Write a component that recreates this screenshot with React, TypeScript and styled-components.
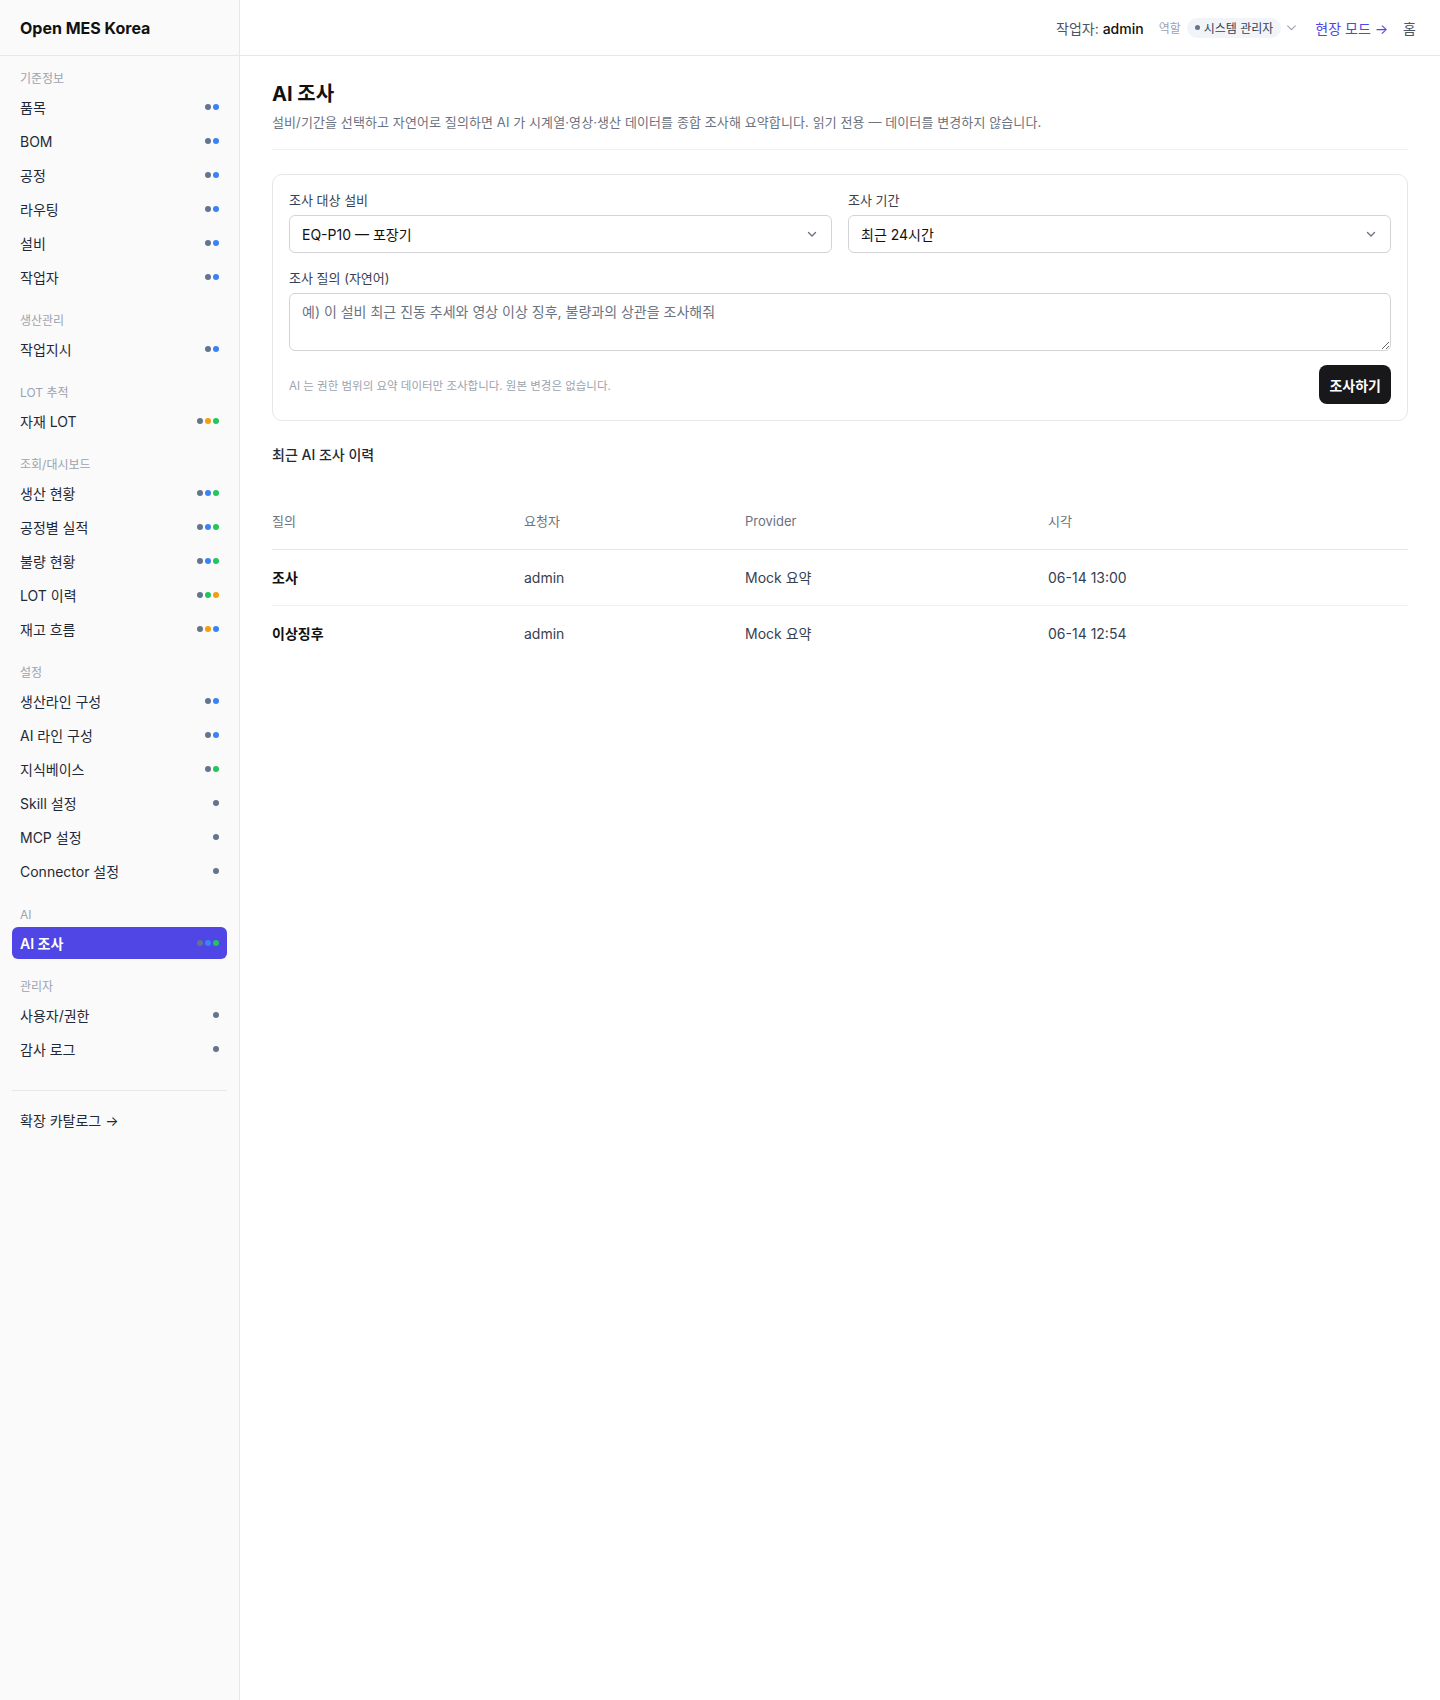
import React from 'react';
import styled, { createGlobalStyle } from 'styled-components';

const GlobalStyle = createGlobalStyle`
  * {
    box-sizing: border-box;
  }
  body {
    margin: 0;
    background: #ffffff;
    color: #1f2937;
    font-family: Inter, "Noto Sans CJK KR", "Noto Sans", sans-serif;
    -webkit-font-smoothing: antialiased;
  }
`;

type DotColor = 'gray' | 'blue' | 'orange' | 'green';

const dotColors: Record<DotColor, string> = {
  gray: '#64748b',
  blue: '#3b82f6',
  orange: '#f59e0b',
  green: '#22c55e',
};

interface NavItem {
  label: string;
  dots: DotColor[];
  active?: boolean;
}

interface NavGroup {
  title: string;
  items: NavItem[];
}

const navGroups: NavGroup[] = [
  {
    title: '기준정보',
    items: [
      { label: '품목', dots: ['gray', 'blue'] },
      { label: 'BOM', dots: ['gray', 'blue'] },
      { label: '공정', dots: ['gray', 'blue'] },
      { label: '라우팅', dots: ['gray', 'blue'] },
      { label: '설비', dots: ['gray', 'blue'] },
      { label: '작업자', dots: ['gray', 'blue'] },
    ],
  },
  {
    title: '생산관리',
    items: [{ label: '작업지시', dots: ['gray', 'blue'] }],
  },
  {
    title: 'LOT 추적',
    items: [{ label: '자재 LOT', dots: ['gray', 'orange', 'green'] }],
  },
  {
    title: '조회/대시보드',
    items: [
      { label: '생산 현황', dots: ['gray', 'blue', 'green'] },
      { label: '공정별 실적', dots: ['gray', 'blue', 'green'] },
      { label: '불량 현황', dots: ['gray', 'blue', 'green'] },
      { label: 'LOT 이력', dots: ['gray', 'green', 'orange'] },
      { label: '재고 흐름', dots: ['gray', 'orange', 'blue'] },
    ],
  },
  {
    title: '설정',
    items: [
      { label: '생산라인 구성', dots: ['gray', 'blue'] },
      { label: 'AI 라인 구성', dots: ['gray', 'blue'] },
      { label: '지식베이스', dots: ['gray', 'green'] },
      { label: 'Skill 설정', dots: ['gray'] },
      { label: 'MCP 설정', dots: ['gray'] },
      { label: 'Connector 설정', dots: ['gray'] },
    ],
  },
  {
    title: 'AI',
    items: [{ label: 'AI 조사', dots: ['gray', 'blue', 'green'], active: true }],
  },
  {
    title: '관리자',
    items: [
      { label: '사용자/권한', dots: ['gray'] },
      { label: '감사 로그', dots: ['gray'] },
    ],
  },
];

const history = [
  { query: '조사', user: 'admin', provider: 'Mock 요약', time: '06-14 13:00' },
  { query: '이상징후', user: 'admin', provider: 'Mock 요약', time: '06-14 12:54' },
];

const Shell = styled.div`
  display: flex;
  min-height: 100vh;
`;

const Sidebar = styled.aside`
  width: 240px;
  flex-shrink: 0;
  background: #fafafa;
  border-right: 1px solid #e5e7eb;
`;

const Brand = styled.div`
  height: 56px;
  display: flex;
  align-items: center;
  padding: 0 20px;
  border-bottom: 1px solid #e5e7eb;
  font-size: 16px;
  font-weight: 700;
  color: #111111;
`;

const Nav = styled.nav`
  padding: 15px 12px 0;
`;

const Group = styled.div`
  & + & {
    margin-top: 20px;
  }
`;

const GroupTitle = styled.div`
  padding: 0 8px;
  margin-bottom: 4px;
  font-size: 12px;
  line-height: 16px;
  font-weight: 400;
  color: #9ca3af;
`;

const ItemList = styled.div`
  display: flex;
  flex-direction: column;
  gap: 2px;
`;

const Item = styled.a<{ $active?: boolean }>`
  height: 32px;
  display: flex;
  align-items: center;
  justify-content: space-between;
  padding: 0 8px;
  border-radius: 6px;
  font-size: 14px;
  font-weight: ${(p) => (p.$active ? 600 : 400)};
  color: ${(p) => (p.$active ? '#ffffff' : '#1f2937')};
  background: ${(p) => (p.$active ? '#4f46e5' : 'transparent')};
  text-decoration: none;
  cursor: pointer;
`;

const Dots = styled.span`
  display: flex;
  gap: 2px;
`;

const Dot = styled.span<{ $color: DotColor }>`
  width: 6px;
  height: 6px;
  border-radius: 50%;
  background: ${(p) => dotColors[p.$color]};
`;

const SideDivider = styled.hr`
  margin: 25px 0 0;
  border: 0;
  border-top: 1px solid #e5e7eb;
`;

const CatalogLink = styled.a`
  display: block;
  margin-top: 20px;
  padding: 0 8px;
  font-size: 14px;
  line-height: 20px;
  font-weight: 400;
  color: #1f2937;
  text-decoration: none;
`;

const Main = styled.div`
  flex: 1;
  min-width: 0;
`;

const TopBar = styled.header`
  height: 56px;
  display: flex;
  align-items: center;
  justify-content: flex-end;
  gap: 15px;
  padding: 0 24px;
  border-bottom: 1px solid #e5e7eb;
  font-size: 14px;
`;

const Operator = styled.span`
  color: #4b5563;

  b {
    font-weight: 500;
    color: #111111;
  }
`;

const RoleBox = styled.div`
  display: flex;
  align-items: center;
  gap: 6px;
  margin-right: 3px;
`;

const RoleLabel = styled.span`
  font-size: 12px;
  color: #9ca3af;
`;

const RolePill = styled.span`
  height: 20px;
  display: inline-flex;
  align-items: center;
  gap: 4px;
  padding: 0 8px;
  border-radius: 10px;
  background: #f1f5f9;
  font-size: 12px;
  font-weight: 400;
  color: #334155;

  &::before {
    content: '';
    width: 5px;
    height: 5px;
    border-radius: 50%;
    background: #64748b;
  }
`;

const RoleCaret = styled.svg`
  margin-left: -1px;
`;

const FieldModeLink = styled.a`
  color: #4f46e5;
  font-weight: 400;
  text-decoration: none;
`;

const HomeLink = styled.a`
  color: #4b5563;
  text-decoration: none;
`;

const Content = styled.main`
  padding: 24px 32px;
`;

const PageHead = styled.div`
  padding-bottom: 17px;
  border-bottom: 1px solid #f0f0f0;
`;

const Title = styled.h1`
  margin: 0;
  font-size: 20px;
  line-height: 28px;
  font-weight: 700;
  color: #111111;
`;

const Subtitle = styled.p`
  margin: 4px 0 0;
  font-size: 13px;
  line-height: 20px;
  letter-spacing: 0.1px;
  color: #6b7280;
`;

const Card = styled.section`
  margin-top: 24px;
  padding: 16px;
  border: 1px solid #e5e7eb;
  border-radius: 10px;
`;

const FieldGrid = styled.div`
  display: grid;
  grid-template-columns: 1fr 1fr;
  gap: 16px;
`;

const Field = styled.label<{ $wide?: boolean }>`
  display: block;
  grid-column: ${(p) => (p.$wide ? '1 / -1' : 'auto')};
`;

const FieldLabel = styled.span`
  display: block;
  margin-bottom: 6px;
  font-size: 13px;
  line-height: 18px;
  font-weight: 400;
  color: #374151;
`;

const SelectBox = styled.div`
  height: 38px;
  display: flex;
  align-items: center;
  padding: 0 12px;
  border: 1px solid #d4d4d8;
  border-radius: 6px;
  background: #ffffff;
  font-size: 14px;
  font-weight: 400;
  color: #111111;
`;

const Chevron = styled.svg`
  margin-left: auto;
  margin-right: 2px;
`;

const QueryInput = styled.textarea`
  display: block;
  width: 100%;
  height: 58px;
  padding: 8px 12px;
  border: 1px solid #d4d4d8;
  border-radius: 6px;
  font-family: inherit;
  font-size: 14px;
  line-height: 20px;
  color: #111111;
  resize: vertical;

  &::placeholder {
    color: #6b7280;
  }
`;

const CardFooter = styled.div`
  margin-top: 14px;
  display: flex;
  align-items: center;
  justify-content: space-between;
`;

const Note = styled.span`
  font-size: 11.5px;
  color: #9ca3af;
`;

const RunButton = styled.button`
  height: 39px;
  padding: 0 10px;
  border: 0;
  border-radius: 8px;
  background: #18181b;
  color: #ffffff;
  font-family: inherit;
  font-size: 14px;
  font-weight: 700;
  cursor: pointer;
`;

const SectionTitle = styled.h2`
  margin: 24px 0 0;
  font-size: 14px;
  line-height: 20px;
  font-weight: 500;
  color: #1f2937;
`;

const Table = styled.table`
  width: 100%;
  margin-top: 28px;
  border-collapse: collapse;
  table-layout: fixed;
  font-size: 14px;
`;

const Th = styled.th`
  height: 56px;
  padding: 0 12px 0 0;
  text-align: left;
  font-size: 13px;
  font-weight: 400;
  color: #6b7280;
  border-bottom: 1px solid #e5e7eb;
`;

const Tr = styled.tr`
  & + & td {
    border-top: 1px solid #f0f0f0;
  }
`;

const Td = styled.td<{ $strong?: boolean }>`
  height: 56px;
  padding: 0 12px 0 0;
  font-weight: ${(p) => (p.$strong ? 700 : 400)};
  color: ${(p) => (p.$strong ? '#111111' : '#374151')};
`;

const ChevronDown = ({ size = 10, color = '#6b7280' }: { size?: number; color?: string }) => (
  <Chevron width={size} height={size} viewBox="0 0 10 10" fill="none">
    <path d="M1.5 3.5 5 7l3.5-3.5" stroke={color} strokeWidth="1.4" strokeLinecap="round" strokeLinejoin="round" />
  </Chevron>
);

const App = () => {
  return (
    <>
      <GlobalStyle />
      <Shell>
        <Sidebar>
          <Brand>Open MES Korea</Brand>
          <Nav>
            {navGroups.map((group) => (
              <Group key={group.title}>
                <GroupTitle>{group.title}</GroupTitle>
                <ItemList>
                  {group.items.map((item) => (
                    <Item key={item.label} $active={item.active}>
                      {item.label}
                      <Dots>
                        {item.dots.map((c, i) => (
                          <Dot key={i} $color={c} />
                        ))}
                      </Dots>
                    </Item>
                  ))}
                </ItemList>
              </Group>
            ))}
            <SideDivider />
            <CatalogLink>확장 카탈로그 →</CatalogLink>
          </Nav>
        </Sidebar>

        <Main>
          <TopBar>
            <Operator>
              작업자: <b>admin</b>
            </Operator>
            <RoleBox>
              <RoleLabel>역할</RoleLabel>
              <RolePill>시스템 관리자</RolePill>
              <RoleCaret width="11" height="11" viewBox="0 0 10 10" fill="none">
                <path d="M1.5 3.5 5 7l3.5-3.5" stroke="#9ca3af" strokeWidth="1" strokeLinecap="round" />
              </RoleCaret>
            </RoleBox>
            <FieldModeLink>현장 모드 →</FieldModeLink>
            <HomeLink>홈</HomeLink>
          </TopBar>

          <Content>
            <PageHead>
              <Title>AI 조사</Title>
              <Subtitle>
                설비/기간을 선택하고 자연어로 질의하면 AI 가 시계열·영상·생산 데이터를 종합 조사해 요약합니다. 읽기 전용 — 데이터를 변경하지 않습니다.
              </Subtitle>
            </PageHead>

            <Card>
              <FieldGrid>
                <Field>
                  <FieldLabel>조사 대상 설비</FieldLabel>
                  <SelectBox>
                    EQ-P10 — 포장기
                    <ChevronDown />
                  </SelectBox>
                </Field>
                <Field>
                  <FieldLabel>조사 기간</FieldLabel>
                  <SelectBox>
                    최근 24시간
                    <ChevronDown />
                  </SelectBox>
                </Field>
                <Field $wide>
                  <FieldLabel>조사 질의 (자연어)</FieldLabel>
                  <QueryInput placeholder="예) 이 설비 최근 진동 추세와 영상 이상 징후, 불량과의 상관을 조사해줘" />
                </Field>
              </FieldGrid>
              <CardFooter>
                <Note>AI 는 권한 범위의 요약 데이터만 조사합니다. 원본 변경은 없습니다.</Note>
                <RunButton>조사하기</RunButton>
              </CardFooter>
            </Card>

            <SectionTitle>최근 AI 조사 이력</SectionTitle>
            <Table>
              <colgroup>
                <col style={{ width: 252 }} />
                <col style={{ width: 221 }} />
                <col style={{ width: 303 }} />
                <col />
              </colgroup>
              <thead>
                <tr>
                  <Th>질의</Th>
                  <Th>요청자</Th>
                  <Th>Provider</Th>
                  <Th>시각</Th>
                </tr>
              </thead>
              <tbody>
                {history.map((row) => (
                  <Tr key={row.time}>
                    <Td $strong>{row.query}</Td>
                    <Td>{row.user}</Td>
                    <Td>{row.provider}</Td>
                    <Td>{row.time}</Td>
                  </Tr>
                ))}
              </tbody>
            </Table>
          </Content>
        </Main>
      </Shell>
    </>
  );
};

export default App;
